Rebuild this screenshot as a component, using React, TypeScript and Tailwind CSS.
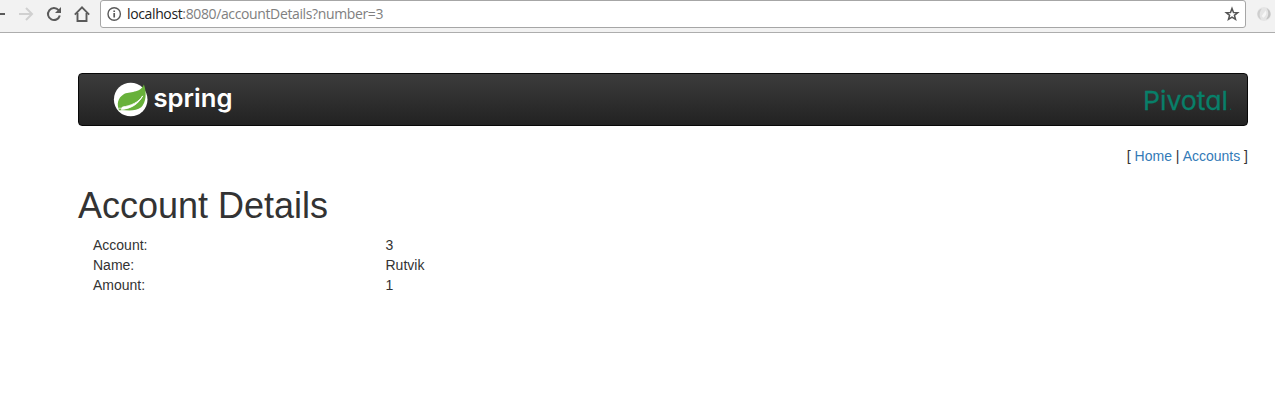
import React from 'react';

const details = [
  { label: 'Account:', value: '3' },
  { label: 'Name:', value: 'Rutvik' },
  { label: 'Amount:', value: '1' },
];

function BrowserBar() {
  return (
    <div className="flex h-[33px] items-start border-b border-[#adadad] bg-[#f2f2f2]">
      <svg className="h-8 w-[100px] shrink-0" viewBox="0 0 100 32" fill="none">
        <path d="M0 14H5" stroke="#5a5a5a" strokeWidth="2" />
        <path d="M19 14H32M26 8L32 14L26 20" stroke="#d0d0d0" strokeWidth="2" />
        <path d="M58.6 10.2A6 6 0 1 0 59.8 15.6" stroke="#5a5a5a" strokeWidth="2" />
        <path d="M61 7V13H55Z" fill="#5a5a5a" />
        <path d="M74.8 14.7L82 7.4L89.2 14.7" stroke="#5a5a5a" strokeWidth="1.8" />
        <path d="M77.5 13V21H86.5V13" stroke="#5a5a5a" strokeWidth="1.9" />
      </svg>
      <div className="flex h-7 w-[1146px] shrink-0 items-center rounded-[3px] border border-[#a6a6a6] bg-white pl-[6px] pr-[5px]">
        <svg className="h-4 w-4 shrink-0" viewBox="0 0 16 16" fill="none">
          <circle cx="7.2" cy="8" r="6.2" stroke="#5a5a5a" strokeWidth="1.4" />
          <path d="M7.2 7V11.5M7.2 4.4V6" stroke="#5a5a5a" strokeWidth="1.7" />
        </svg>
        <div className="ml-1 grow whitespace-nowrap font-['Open_Sans',sans-serif] text-[14px] leading-[26px] tracking-[-0.37px] text-[#808080]">
          <span className="text-[#222]">localhost</span>:8080/accountDetails?number=3
        </div>
        <svg className="h-4 w-4 shrink-0" viewBox="0 0 16 16" fill="none">
          <path
            d="M8 2.4L9.5 6.4L13.7 6.6L10.4 9.3L11.5 13.4L8 11.1L4.5 13.4L5.6 9.3L2.3 6.6L6.5 6.4Z"
            stroke="#555"
            strokeWidth="1.5"
          />
        </svg>
      </div>
      <svg className="ml-[9px] mt-[5px] h-[18px] w-[18px] shrink-0" viewBox="0 0 18 18" fill="none">
        <circle cx="9" cy="9" r="7" fill="#e5e5e5" />
        <path d="M6.5 15C1 12 1 5 7 3.5C3.8 7.5 4.3 11.5 6.5 15Z" fill="#cecece" />
        <path d="M11.5 3C17 6 17 13 11 14.5C14.2 10.5 13.7 6.5 11.5 3Z" fill="#c3c3c3" />
        <path d="M6.7 11L10.7 5.5C12.2 7.8 11 11 8.3 12.8Z" fill="#f6f6f6" />
      </svg>
    </div>
  );
}

function SpringLogo() {
  return (
    <svg className="h-[40px] w-[124px] overflow-visible" viewBox="0 0 124 40">
      <circle cx="17.7" cy="17.5" r="16.8" fill="#fff" />
      <path
        d="M30.9 2.5C33.8 10 33.3 20.5 28.2 25.3C22.5 29.8 14 28.2 6.3 28C3.3 22.4 4.9 15.7 10.4 12.4C16.6 8.8 27.1 11.8 30.9 2.5Z"
        fill="#68b13a"
      />
      <path d="M7.5 27.4C17.5 27.1 25.5 22 29.7 13.9C25.7 20.3 18.5 23.6 9.4 25.1Z" fill="#fff" stroke="#fff" strokeWidth="0.9" />
      <circle cx="7" cy="27.4" r="1.4" fill="#68b13a" stroke="#fff" strokeWidth="0.6" />
      <text
        x="40.5"
        y="24.8"
        fill="#fff"
        textLength="79"
        lengthAdjust="spacingAndGlyphs"
        className="font-['Inter',sans-serif] text-[25.5px] font-semibold"
      >
        spring
      </text>
    </svg>
  );
}

function PivotalLogo() {
  return (
    <svg className="h-[40px] w-[90px] overflow-visible" viewBox="0 0 90 40">
      <text
        x="-1"
        y="28"
        fill="#087f69"
        stroke="#087f69"
        strokeWidth="0.3"
        textLength="85"
        lengthAdjust="spacingAndGlyphs"
        className="font-['Inter',sans-serif] text-[26px] [font-feature-settings:'cv11']"
      >
        Pivotal
      </text>
      <circle cx="86.5" cy="27.3" r="0.7" fill="#075f50" />
    </svg>
  );
}

export default function App() {
  return (
    <div className="h-[404px] overflow-hidden bg-white font-['Liberation_Sans',sans-serif] text-[14px] leading-5 text-[#333]">
      <BrowserBar />
      <main className="ml-[78px] mt-10 w-[1170px]">
        <nav className="flex h-[53px] items-start justify-between rounded-[4px] border border-[#080808] bg-linear-to-b from-[#3c3c3c] to-[#222] pl-[34px] pr-[13px] pt-2">
          <SpringLogo />
          <PivotalLogo />
        </nav>
        <div className="mt-5 text-right">
          [ <a className="text-[#337ab7]">Home</a> | <a className="text-[#337ab7]">Accounts</a> ]
        </div>
        <h1 className="mt-5 text-[36px] font-medium leading-[39.6px]">Account Details</h1>
        <dl className="mt-[9px] pl-[15px]">
          {details.map(({ label, value }) => (
            <div key={label} className="flex">
              <dt className="w-[292.5px]">{label}</dt>
              <dd>{value}</dd>
            </div>
          ))}
        </dl>
      </main>
    </div>
  );
}
